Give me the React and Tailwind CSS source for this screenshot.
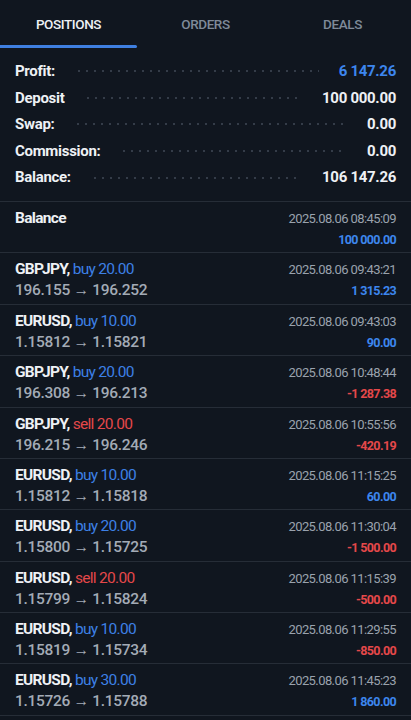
import React from "react";

const summary = [
  { label: "Profit:", value: "6 147.26", blue: true },
  { label: "Deposit", value: "100 000.00" },
  { label: "Swap:", value: "0.00" },
  { label: "Commission:", value: "0.00" },
  { label: "Balance:", value: "106 147.26" },
];

const deals = [
  { sym: "GBPJPY", side: "buy", vol: "20.00", from: "196.155", to: "196.252", time: "2025.08.06 09:43:21", pl: "1 315.23" },
  { sym: "EURUSD", side: "buy", vol: "10.00", from: "1.15812", to: "1.15821", time: "2025.08.06 09:43:03", pl: "90.00" },
  { sym: "GBPJPY", side: "buy", vol: "20.00", from: "196.308", to: "196.213", time: "2025.08.06 10:48:44", pl: "-1 287.38" },
  { sym: "GBPJPY", side: "sell", vol: "20.00", from: "196.215", to: "196.246", time: "2025.08.06 10:55:56", pl: "-420.19" },
  { sym: "EURUSD", side: "buy", vol: "10.00", from: "1.15812", to: "1.15818", time: "2025.08.06 11:15:25", pl: "60.00" },
  { sym: "EURUSD", side: "buy", vol: "20.00", from: "1.15800", to: "1.15725", time: "2025.08.06 11:30:04", pl: "-1 500.00" },
  { sym: "EURUSD", side: "sell", vol: "20.00", from: "1.15799", to: "1.15824", time: "2025.08.06 11:15:39", pl: "-500.00" },
  { sym: "EURUSD", side: "buy", vol: "10.00", from: "1.15819", to: "1.15734", time: "2025.08.06 11:29:55", pl: "-850.00" },
  { sym: "EURUSD", side: "buy", vol: "30.00", from: "1.15726", to: "1.15788", time: "2025.08.06 11:45:23", pl: "1 860.00" },
];

const DealRow = ({ d }) => {
  const loss = d.pl.startsWith("-");
  return (
    <div className="flex justify-between border-b border-[#262d37] px-[15px] pt-[6px] pb-[2.4px]">
      <div className="flex flex-col">
        <div className="text-[15.5px] leading-[21px] tracking-[-0.045em]">
          <span className="font-bold text-[#eef1f5]">{d.sym}, </span>
          <span className={d.side === "buy" ? "text-[#3d80e6]" : "text-[#e5484a]"}>
            {d.side} {d.vol}
          </span>
        </div>
        <div className="text-[15.5px] leading-[21px] font-medium text-[#a3abb6] tracking-[-0.02em]">
          {d.from} → {d.to}
        </div>
      </div>
      <div className="flex flex-col items-end">
        <div className="text-[13px] leading-[21px] text-[#9aa2ad] tracking-[-0.045em]">{d.time}</div>
        <div className={`text-[12.5px] leading-[21px] font-bold tracking-[-0.05em] ${loss ? "text-[#e5484a]" : "text-[#3d86ee]"}`}>
          {d.pl}
        </div>
      </div>
    </div>
  );
};

export default function App() {
  return (
    <div className="w-[411px] h-[720px] overflow-hidden bg-[#10161f] font-['Roboto',sans-serif]">
      {/* Tabs */}
      <div className="flex h-[48px]">
        <div className="w-[137px] flex flex-col">
          <div className="flex-1 flex items-center justify-center pt-[3px] text-[13.5px] font-medium text-[#eef1f5] tracking-[-0.03em]">POSITIONS</div>
          <div className="h-[3px] bg-[#3f7fe0] rounded-r-full"></div>
        </div>
        <div className="w-[137px] flex items-center justify-center text-[13.5px] font-medium text-[#7f8a99] tracking-[-0.03em]">ORDERS</div>
        <div className="w-[137px] flex items-center justify-center text-[13.5px] font-medium text-[#7f8a99] tracking-[-0.03em]">DEALS</div>
      </div>

      {/* Summary */}
      <div className="px-[15px] pt-[10px] pb-[10px] border-b border-[#262d37]">
        {summary.map((s) => (
          <div key={s.label} className="flex items-center h-[26.6px]">
            <span className="text-[15px] font-bold text-[#eef1f5] tracking-[-0.02em]">{s.label}</span>
            <span className="flex-1 mx-[20px] h-[4px] bg-[radial-gradient(circle,#343c48_0.9px,transparent_1.2px)] bg-[length:8px_4px]"></span>
            <span className={`text-[15px] font-bold tracking-[-0.02em] ${s.blue ? "text-[#3d86ee]" : "text-[#eef1f5]"}`}>
              {s.value}
            </span>
          </div>
        ))}
      </div>

      {/* Balance row */}
      <div className="flex justify-between border-b border-[#262d37] px-[15px] pt-[6px] pb-[2.4px]">
        <div className="text-[15.5px] leading-[21px] font-bold text-[#eef1f5] tracking-[-0.045em]">Balance</div>
        <div className="flex flex-col items-end">
          <div className="text-[13px] leading-[21px] text-[#9aa2ad] tracking-[-0.045em]">2025.08.06 08:45:09</div>
          <div className="text-[12.5px] leading-[21px] font-bold text-[#3d86ee] tracking-[-0.05em]">100 000.00</div>
        </div>
      </div>

      {deals.map((d, i) => (
        <DealRow key={i} d={d} />
      ))}
    </div>
  );
}
